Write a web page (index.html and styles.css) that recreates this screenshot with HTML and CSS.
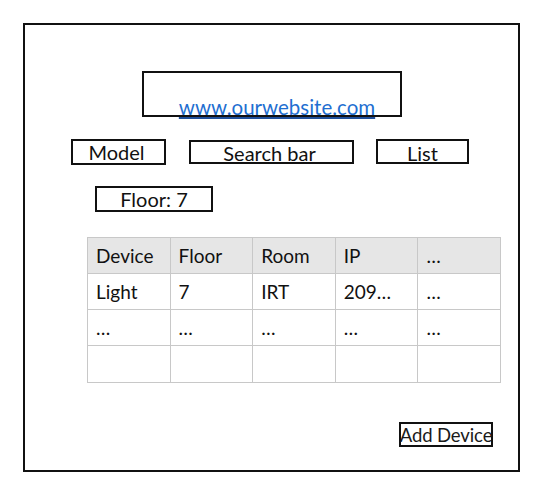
FILE: index.html
```html
<!DOCTYPE html>
<html>
<head>
<meta charset="utf-8">
<link rel="stylesheet" href="styles.css">
</head>
<body>
<div class="frame">
  <div class="site-box"><a class="site-link" href="#">www.ourwebsite.com</a></div>
  <div class="toolbar">
    <div class="btn btn-model">Model</div>
    <div class="btn btn-search">Search bar</div>
    <div class="btn btn-list">List</div>
  </div>
  <div class="btn btn-floor">Floor: 7</div>
  <table class="devices">
    <thead>
      <tr><th>Device</th><th>Floor</th><th>Room</th><th>IP</th><th>…</th></tr>
    </thead>
    <tbody>
      <tr><td>Light</td><td>7</td><td>IRT</td><td>209…</td><td>…</td></tr>
      <tr><td>…</td><td>…</td><td>…</td><td>…</td><td>…</td></tr>
      <tr class="tall"><td></td><td></td><td></td><td></td><td></td></tr>
    </tbody>
  </table>
  <div class="btn btn-add">Add Device</div>
</div>
</body>
</html>
```

FILE: styles.css
```css
* { box-sizing: border-box; }
html, body { margin: 0; padding: 0; background: #fff; }
body {
  font-family: Lato, "Open Sans", sans-serif;
  color: #111;
}
.frame {
  margin: 23px 0 0 23px;
  width: 497px;
  height: 449px;
  border: 2px solid #111;
  display: flex;
  flex-direction: column;
  align-items: flex-start;
}
.site-box {
  margin: 46px 0 0 117px;
  width: 260px;
  height: 46px;
  border: 2px solid #111;
  display: flex;
  align-items: flex-end;
  justify-content: center;
  padding-left: 10px;
  white-space: nowrap;
}
.site-link {
  color: #1f6fd1;
  font-size: 20.5px;
  line-height: 20px;
  margin-bottom: -2px;
  text-decoration: underline;
  text-decoration-color: #1f4f9a;
  text-underline-offset: 2px;
}
.toolbar {
  margin: 22px 0 0 46px;
  display: flex;
  align-items: flex-start;
}
.btn {
  border: 2px solid #111;
  display: flex;
  align-items: center;
  justify-content: center;
  font-size: 20px;
  line-height: 20px;
  white-space: nowrap;
}
.btn-model { width: 95px; height: 26px; padding-right: 4px; }
.btn-search { width: 165px; height: 24px; margin: 1px 0 0 23px; padding-top: 2px; padding-right: 4px; }
.btn-list { width: 93px; height: 25px; margin-left: 22px; padding-top: 2px; }
.btn-floor { width: 118px; height: 26px; margin: 21px 0 0 70px; }
.devices {
  margin: 25px 0 0 62px;
  width: 414px;
  border-collapse: collapse;
  table-layout: fixed;
  font-size: 19px;
}
.devices th, .devices td {
  border: 1px solid #c8c8c8;
  height: 36px;
  padding: 0 0 0 8px;
  text-align: left;
  font-weight: normal;
  vertical-align: middle;
  line-height: 20px;
}
.devices th { background: #e6e6e6; }
.devices tr.tall td { height: 37px; }
.btn-add {
  width: 94px;
  height: 25px;
  margin: 39px 0 0 374px;
  font-size: 18.5px;
  letter-spacing: -0.1px;
  line-height: 20px;
  padding-top: 1px;
  color: #1a1a1a;
  justify-content: center;
}
```
